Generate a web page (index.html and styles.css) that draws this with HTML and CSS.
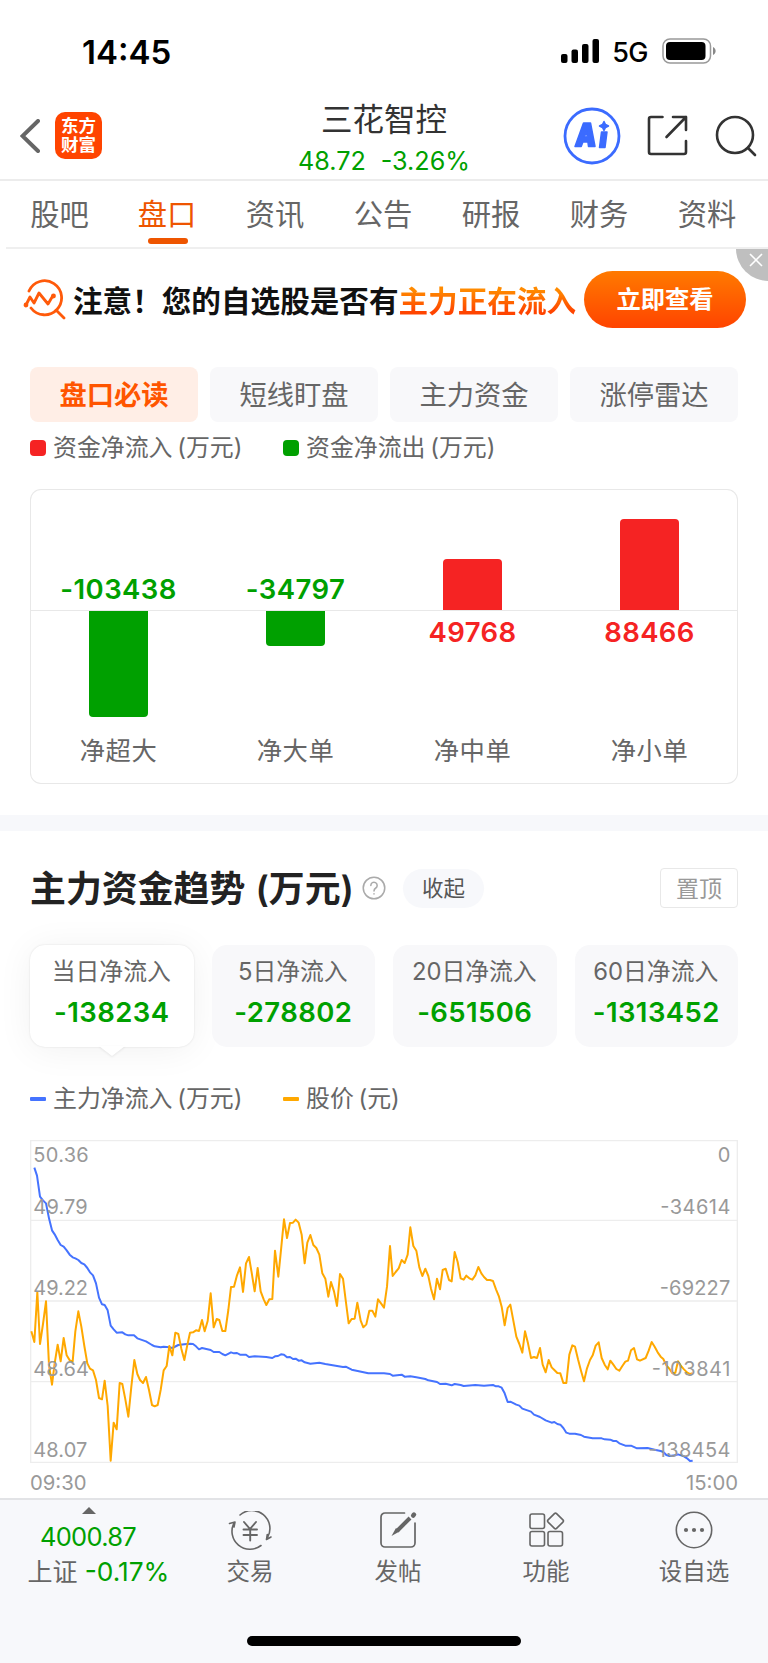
FILE: index.html
```
<!DOCTYPE html>
<html lang="zh-CN">
<head>
    <meta charset="UTF-8">
    <meta name="viewport" content="width=device-width, initial-scale=1.0">
    <title>三花智控 - 盘口</title>
    <link rel="stylesheet" href="styles.css">
</head>
<body>
    <div class="status-bar">
        <span class="time">14:45</span>
        <div class="status-icons">
            <svg class="signal" width="39" height="25" viewBox="0 0 39 25">
                <rect x="0" y="15" width="6.5" height="9" rx="2"/>
                <rect x="10.5" y="10.500" width="6.500" height="13.500" rx="2"/>
                <rect x="21" y="5" width="6.500" height="19" rx="2"/>
                <rect x="31.500" y="0" width="6.500" height="24" rx="2"/>
            </svg>
            <span class="network">5G</span>
            <svg class="battery" width="54" height="26" viewBox="0 0 54 26">
                <rect x="1" y="1" width="47.500" height="24" rx="7" fill="none" stroke="#999" stroke-width="1.5"/>
                <rect x="4" y="4" width="39.500" height="18" rx="4"/>
                <path d="M51 9c3.500 1.500 3.500 6.500 0 8z" fill="#888"/>
            </svg>
        </div>
    </div>

    <header class="header">
        <div class="header-left">
            <svg class="back" width="20" height="34" viewBox="0 0 20 34"><path d="M18 2 2.500 17 18 32" fill="none" stroke="#666" stroke-width="4" stroke-linecap="round"/></svg>
            <div class="logo">东方<br>财富</div>
        </div>
        <div class="stock">
            <h1 class="stock-name">三花智控</h1>
            <div class="stock-price"><span>48.72</span><span>-3.26%</span></div>
        </div>
        <div class="header-right">
            <svg class="ai" width="58" height="58" viewBox="0 0 58 58">
                <circle cx="29" cy="29" r="27" fill="none" stroke="#3b6bff" stroke-width="2.800"/>
                <g fill="#3b6bff" stroke="#3b6bff" stroke-width="1.500" stroke-linejoin="round" fill-rule="evenodd">
                    <path d="M12 39.500 20.500 16h7L32 39.500h-6.500l-.6-4.500h-5l-1.700 4.500zM21.500 30h2.700l-.7-6z"/>
                    <path d="M38.500 25h5.500l-2 15.500h-5.500z"/>
                    <path d="M41 14.500 42.500 17.500l3 1.500-3 1.500-1.500 3-1.500-3-3-1.500 3-1.500z"/>
                </g>
            </svg>
            <svg class="share" width="41" height="42" viewBox="0 0 41 42" fill="none" stroke="#333" stroke-width="2.600" stroke-linecap="round" stroke-linejoin="round">
                <path d="M15.500 2H4a2 2 0 0 0-2 2v33a2 2 0 0 0 2 2h33a2 2 0 0 0 2-2V26M26 2h13v13M39 2 19.500 22"/>
            </svg>
            <svg class="search" width="42" height="42" viewBox="0 0 42 42" fill="none" stroke="#333" stroke-width="2.600" stroke-linecap="round">
                <circle cx="20" cy="20" r="18"/><path d="m33 33 7 7"/>
            </svg>
        </div>
    </header>

    <nav class="tabs">
        <a class="tab">股吧</a>
        <a class="tab active">盘口</a>
        <a class="tab">资讯</a>
        <a class="tab">公告</a>
        <a class="tab">研报</a>
        <a class="tab">财务</a>
        <a class="tab">资料</a>
    </nav>

    <div class="banner">
        <svg class="banner-icon" width="44" height="42" viewBox="0 0 44 42" fill="none" stroke="#ff5a0a" stroke-width="2.800" stroke-linecap="round" stroke-linejoin="round">
            <path d="M6 12A17 17 0 1 1 8 29M33 31l8 8"/>
            <path d="m3 26 4-8 4 6 5-10 9 11 5-8.500"/>
            <circle cx="3" cy="26" r="1"/><circle cx="30.500" cy="17" r="1"/>
        </svg>
        <p class="banner-text">注意！您的自选股是否有<span>主力正在流入</span></p>
        <button class="banner-btn">立即查看</button>
        <div class="banner-close">
            <svg width="14" height="14" viewBox="0 0 14 14"><path d="m1 1 12 12M13 1 1 13" stroke="#fff" stroke-width="1.600"/></svg>
        </div>
    </div>

    <div class="pills">
        <button class="pill active">盘口必读</button>
        <button class="pill">短线盯盘</button>
        <button class="pill">主力资金</button>
        <button class="pill">涨停雷达</button>
    </div>

    <div class="legend">
        <span class="legend-item"><i class="square red"></i>资金净流入 (万元)</span>
        <span class="legend-item"><i class="square green"></i>资金净流出 (万元)</span>
    </div>

    <div class="flow-chart">
        <div class="flow-col down">
            <div class="upper"><b>-103438</b></div>
            <div class="lower"><div class="bar" style="height: 106px"></div></div>
            <span class="flow-name">净超大</span>
        </div>
        <div class="flow-col down">
            <div class="upper"><b>-34797</b></div>
            <div class="lower"><div class="bar" style="height: 35px"></div></div>
            <span class="flow-name">净大单</span>
        </div>
        <div class="flow-col up">
            <div class="upper"><div class="bar" style="height: 51px"></div></div>
            <div class="lower"><b>49768</b></div>
            <span class="flow-name">净中单</span>
        </div>
        <div class="flow-col up">
            <div class="upper"><div class="bar" style="height: 91px"></div></div>
            <div class="lower"><b>88466</b></div>
            <span class="flow-name">净小单</span>
        </div>
    </div>

    <div class="divider"></div>

    <div class="section-head">
        <h2>主力资金趋势 (万元)</h2>
        <svg class="help" width="24" height="24" viewBox="0 0 25 25" fill="none" stroke="#aaa" stroke-width="1.600" stroke-linecap="round">
            <circle cx="12.500" cy="12.500" r="11.200"/>
            <path d="M9.200 9.800a3.300 3.300 0 1 1 5.200 2.700c-1.300.9-1.900 1.500-1.900 3"/><path d="M12.500 18.500v.2"/>
        </svg>
        <button class="collapse">收起</button>
        <button class="pin">置顶</button>
    </div>

    <div class="periods">
        <div class="period active"><span>当日净流入</span><b>-138234</b></div>
        <div class="period"><span>5日净流入</span><b>-278802</b></div>
        <div class="period"><span>20日净流入</span><b>-651506</b></div>
        <div class="period"><span>60日净流入</span><b>-1313452</b></div>
    </div>

    <div class="legend trend-legend">
        <span class="legend-item"><i class="dash blue"></i>主力净流入 (万元)</span>
        <span class="legend-item"><i class="dash orange"></i>股价 (元)</span>
    </div>

    <div class="trend">
        <svg class="trend-chart" width="708" height="323" viewBox="30 30 2124 969">
            <path class="grid" d="M32 32H2152V997H32zM32 271H2152M32 513H2152M32 755H2152"/>
            <!-- 主力净流入 -->
            <polyline class="line-flow" points="43,113 51,137 60,200 69,211 78,220 87,265 96,301 104,313 113,330 122,345 131,350 140,361 149,374 158,382 166,385 175,390 184,399 193,403 202,414 210,427 219,436 228,460 237,503 246,523 254,525 263,541 272,587 281,598 290,608 307,607 316,613 325,616 342,616 352,625 378,634 396,645 404,649 422,652 431,650 448,652 457,654 475,645 493,643 510,641 519,642 528,649 537,658 546,654 572,660 581,666 598,666 607,672 616,676 633,667 642,670 651,669 660,674 678,674 687,681 704,679 739,681 757,684 765,679 774,678 783,673 792,674 801,682 810,681 819,687 827,686 836,692 845,691 854,697 871,701 898,698 916,702 969,711 977,710 995,719 1013,723 1045,730 1092,730 1110,732 1118,737 1145,734 1154,740 1171,739 1189,742 1216,747 1225,751 1251,756 1260,762 1277,761 1295,766 1304,762 1322,765 1331,768 1366,765 1392,767 1419,765 1428,769 1436,769 1445,773 1454,790 1463,816 1471,815 1489,824 1498,827 1507,836 1533,845 1542,854 1560,861 1577,871 1595,878 1603,876 1612,882 1621,884 1630,894 1639,908 1648,911 1665,911 1683,915 1692,920 1718,925 1745,925 1754,928 1771,929 1780,933 1789,933 1798,940 1816,947 1833,947 1851,955 1883,954 1904,959 1922,963 1930,966 1939,975 1948,978 1966,976 1974,973 1992,979 2001,985 2010,993 2018,992"/>
            <!-- 股价 -->
            <polyline class="line-price" points="34,604 43,636 52,486 60,642 69,582 78,514 87,706 96,764 104,700 113,644 122,694 131,624 140,676 149,691 158,694 166,604 175,544 184,590 193,648 202,700 210,716 219,721 228,750 237,804 246,808 254,752 263,828 272,992 281,878 290,898 299,759 307,762 316,808 325,860 334,770 343,690 352,732 360,750 369,759 378,741 387,780 396,825 404,829 413,825 422,780 431,721 440,708 448,648 457,676 466,608 475,612 484,656 493,690 501,650 510,608 519,607 528,601 537,603 546,570 554,604 563,573 572,490 581,592 590,567 598,570 607,603 616,603 625,540 633,471 642,470 651,436 660,412 669,486 678,400 687,381 695,428 704,484 713,414 722,484 731,508 739,525 748,508 757,507 765,362 775,440 784,350 792,268 801,324 810,279 819,278 827,269 836,278 845,314 854,400 862,338 871,315 880,345 889,354 898,374 907,430 916,446 925,500 933,456 942,484 951,528 960,432 969,446 977,510 986,580 995,567 1004,566 1012,518 1022,572 1030,592 1039,583 1048,542 1057,542 1066,560 1074,508 1083,520 1092,533 1101,470 1110,348 1118,438 1127,426 1136,415 1145,390 1154,399 1163,374 1171,292 1180,348 1189,362 1198,412 1207,438 1216,416 1225,438 1233,476 1242,508 1251,446 1260,478 1268,420 1277,416 1287,450 1295,454 1304,366 1313,396 1322,445 1331,449 1339,437 1348,445 1357,449 1366,436 1375,411 1384,430 1392,441 1401,450 1410,450 1419,453 1428,478 1437,500 1445,530 1454,586 1463,534 1471,524 1480,572 1489,620 1498,642 1507,668 1515,604 1524,640 1533,684 1542,681 1551,684 1560,654 1568,704 1577,727 1586,690 1595,712 1603,720 1612,729 1621,730 1630,759 1639,759 1648,674 1657,646 1665,650 1674,688 1683,722 1692,754 1701,715 1710,690 1718,676 1727,647 1736,637 1745,684 1754,704 1763,718 1771,692 1780,704 1789,717 1798,722 1807,708 1816,695 1824,692 1833,661 1842,654 1851,688 1860,692 1877,684 1886,662 1895,636 1904,650 1913,667 1922,680 1930,687 1939,706 1948,716 1957,730 1966,728 1974,694 1983,708 1992,718 2001,727 2010,732 2018,730"/>
            <g class="axis">
                <text x="40" y="95" textLength="166">50.36</text>
                <text x="40" y="253" textLength="163">49.79</text>
                <text x="40" y="496" textLength="164">49.22</text>
                <text x="40" y="739" textLength="167">48.64</text>
                <text x="40" y="981" textLength="162">48.07</text>
            </g>
            <g class="axis end">
                <text x="2131" y="95">0</text>
                <text x="2131" y="253" textLength="210">-34614</text>
                <text x="2131" y="496" textLength="212">-69227</text>
                <text x="2131" y="739" textLength="236">-103841</text>
                <text x="2131" y="981" textLength="246">-138454</text>
            </g>
        </svg>
        <div class="trend-time"><span>09:30</span><span>15:00</span></div>
    </div>

    <footer class="bottom-bar">
        <div class="index">
            <i class="caret"></i>
            <span class="index-value">4000.87</span>
            <span class="index-row">上证 <em>-0.17%</em></span>
        </div>
        <div class="action">
            <svg width="44" height="40" viewBox="0 0 44 40" fill="none" stroke="#666" stroke-width="1.600" stroke-linecap="round" stroke-linejoin="round">
                <path d="M12 4A18 18 0 0 1 39.500 26.500M38.500 28.500l4.500-2.500M38.500 28.500l.8-5"/>
                <path d="M33 34.500A18 18 0 0 1 6 12M1.500 12.500l5.500-1.500-1 5"/>
                <path d="m16 11 6 7 6-7M15.500 18.500h13.500M15.500 24h13.500M22.200 18v11.500" stroke-width="1.900"/>
            </svg>
            <span>交易</span>
        </div>
        <div class="action">
            <svg width="44" height="40" viewBox="0 0 44 40" fill="none" stroke="#666" stroke-width="1.700" stroke-linecap="round">
                <path d="M28.500 2H9a4 4 0 0 0-4 4v26a4 4 0 0 0 4 4h26a4 4 0 0 0 4-4V12"/>
                <path d="M37.200 4.500 38 3.600" stroke-width="4.500"/>
                <path d="M34 7 21 20" stroke-width="4" stroke-linecap="butt"/>
                <path d="m23.500 20.500-8 4.500 4.500-8z" fill="#666" stroke="none"/>
            </svg>
            <span>发帖</span>
        </div>
        <div class="action">
            <svg width="44" height="40" viewBox="0 0 44 40" fill="none" stroke="#666" stroke-width="1.600" stroke-linejoin="round">
                <rect x="6" y="3" width="14.500" height="14.500" rx="2"/>
                <rect x="6" y="20.500" width="14.500" height="14.500" rx="2"/>
                <rect x="24" y="20.500" width="14.500" height="14.500" rx="2"/>
                <rect x="25.500" y="4" width="12" height="12" rx="1.500" transform="rotate(45 31.500 10)"/>
            </svg>
            <span>功能</span>
        </div>
        <div class="action">
            <svg width="44" height="40" viewBox="0 0 44 40">
                <circle cx="22" cy="19" r="17.700" fill="none" stroke="#666" stroke-width="1.600"/>
                <g fill="#666"><circle cx="14" cy="19" r="2.100"/><circle cx="22" cy="19" r="2.100"/><circle cx="30" cy="19" r="2.100"/></g>
            </svg>
            <span>设自选</span>
        </div>
        <div class="home-indicator"></div>
    </footer>
</body>
</html>
```
FILE: styles.css
```
* {
    margin: 0;
    padding: 0;
    box-sizing: border-box;
}

body {
    width: 768px;
    height: 1663px;
    background: #fff;
    color: #666;
    font-family: Inter, "Noto Sans CJK SC", sans-serif;
    overflow: hidden;
}

button {
    border: none;
    font-family: inherit;
    color: inherit;
}

svg {
    display: block;
    flex-shrink: 0;
}

/* status bar */
.status-bar {
    height: 96px;
    padding: 6px 52px 0 82px;
    display: flex;
    align-items: center;
    justify-content: space-between;
    color: #000;
}

.time {
    font-size: 33px;
    font-weight: 600;
    margin-top: 1px;
}

.status-icons {
    display: flex;
    align-items: center;
}

.network {
    font-size: 27px;
    font-weight: 500;
    letter-spacing: -0.5px;
    line-height: 34px;
    margin: 3px 14px 0 12px;
}

/* header */
.header {
    height: 85px;
    border-bottom: 2px solid #ececec;
    display: grid;
    grid-template-columns: 1fr auto 1fr;
    align-items: center;
}

.header-left {
    display: flex;
    align-items: center;
    padding: 0 0 4px 20px;
}

.logo {
    width: 47px;
    height: 47px;
    margin-left: 15px;
    border-radius: 10px;
    background: #ff4400;
    color: #fff;
    font-size: 17.5px;
    font-weight: 700;
    line-height: 19px;
    text-align: center;
    padding-top: 4px;
}

.stock {
    text-align: center;
}

.stock-name {
    font-size: 31.5px;
    font-weight: 400;
    line-height: 40px;
    margin-top: -3px;
    color: #333;
}

.stock-price {
    display: flex;
    gap: 15px;
    font-size: 25.2px;
    line-height: 30px;
    margin-top: 6px;
    margin-bottom: -3px;
    color: #00a000;
}

.header-right {
    display: flex;
    align-items: center;
    justify-content: flex-end;
    padding: 0 11px 3px 0;
}

.share {
    margin: 0 27px 0 26px;
}

/* tabs */
.tabs {
    height: 68px;
    margin-left: 6px;
    padding-right: 7px;
    border-bottom: 2px solid #efefef;
    display: flex;
}

.tab {
    width: 108px;
    flex-shrink: 0;
    display: flex;
    flex-direction: column;
    align-items: center;
    font-size: 29.3px;
    line-height: 67px;
}

.tab:first-child {
    width: 107px;
}

.tab.active {
    color: #ee5500;
}

.tab.active::after {
    content: "";
    width: 40px;
    height: 6px;
    border-radius: 3px;
    background: #ee5500;
    margin: -10px 0 0 2px;
}

/* banner */
.banner {
    position: relative;
    height: 101px;
    padding: 0 22px 0 23px;
    display: flex;
    align-items: center;
    overflow: hidden;
}

.banner-text {
    margin: 3px 0 0 6px;
    font-size: 29.6px;
    font-weight: 700;
    line-height: 40px;
    color: #111;
    white-space: nowrap;
}

.banner-text span {
    background: linear-gradient(#ff8a00 20%, #ff4400 80%);
    -webkit-background-clip: text;
    background-clip: text;
    color: transparent;
}

.banner-btn {
    width: 162px;
    height: 57px;
    margin-left: auto;
    padding-bottom: 4px;
    border-radius: 29px;
    background: linear-gradient(#ff7a00, #ff4400);
    color: #fff;
    font-size: 24.3px;
    font-weight: 700;
}

.banner-close {
    position: absolute;
    top: -33px;
    right: -33px;
    width: 65px;
    height: 65px;
    border-radius: 50%;
    background: #bfbfbf;
}

.banner-close svg {
    margin: 37px 0 0 13px;
}

/* pills */
.pills {
    display: grid;
    grid-template-columns: repeat(4, 1fr);
    gap: 12px;
    margin: 17px 30px 0;
}

.pill {
    height: 55px;
    padding-bottom: 3px;
    border-radius: 8px;
    background: #f8f8fa;
    font-size: 27.3px;
}

.pill.active {
    background: #ffeee6;
    color: #ff5500;
    font-weight: 700;
}

/* legends */
.legend {
    height: 53px;
    padding-left: 30px;
    display: flex;
    align-items: center;
    font-size: 23.9px;
    word-spacing: -2px;
    line-height: 36px;
}

.legend-item {
    width: 253px;
    display: flex;
    align-items: center;
    white-space: pre;
    margin-top: -2px;
}

.square {
    width: 16px;
    height: 16px;
    border-radius: 4px;
    margin-right: 7px;
}

.dash {
    width: 16px;
    height: 4px;
    border-radius: 1px;
    margin-right: 7px;
}

.red {
    background: #f52323;
}

.green {
    background: #00a000;
}

.blue {
    background: #4573ff;
}

.orange {
    background: #ffa800;
}

/* fund flow bars */
.flow-chart {
    height: 295px;
    margin: 14px 30px 31px;
    box-shadow: inset 0 0 0 1px #e8e8e8;
    border-radius: 11px;
    display: grid;
    grid-template-columns: repeat(4, 177px);
}

.flow-col {
    display: flex;
    flex-direction: column;
    align-items: center;
}

.upper {
    width: 100%;
    height: 122px;
    border-bottom: 1px solid #e8e8e8;
    display: flex;
    flex-direction: column;
    align-items: center;
    justify-content: flex-end;
}

.lower {
    height: 122px;
}

.flow-col b {
    display: block;
    font-size: 27.5px;
    font-weight: 600;
    letter-spacing: 0.4px;
    line-height: 43px;
}

.upper b {
    margin-bottom: -1px;
}

.bar {
    width: 59px;
}

.down b {
    color: #00a000;
}

.up b {
    color: #f52323;
}

.down .bar {
    background: #00a000;
    border-radius: 0 0 4px 4px;
}

.up .bar {
    background: #f52323;
    border-radius: 4px 4px 0 0;
}

.flow-name {
    font-size: 25.3px;
    letter-spacing: 0.5px;
    line-height: 36px;
}

.divider {
    height: 16px;
    background: #f7f8fb;
}

/* trend */
.section-head {
    height: 114px;
    padding: 0 30px;
    display: flex;
    align-items: center;
}

.section-head h2 {
    margin-top: -4px;
    font-size: 35.9px;
    font-weight: 600;
    word-spacing: 1px;
    color: #222;
    white-space: nowrap;
}

.help {
    margin-left: 8px;
}

.collapse {
    width: 81px;
    height: 39px;
    margin-left: 17px;
    padding-bottom: 3px;
    border-radius: 20px;
    background: #f7f8fb;
    color: #555;
    font-size: 21.5px;
}

.pin {
    width: 78px;
    height: 40px;
    margin-left: auto;
    padding-bottom: 2px;
    border: 1.5px solid #e8e8e8;
    border-radius: 4px;
    background: #fff;
    color: #999;
    font-size: 23px;
}

.periods {
    display: grid;
    grid-template-columns: repeat(4, 1fr);
    gap: 18px;
    margin: 0 30px;
}

.period {
    position: relative;
    height: 102px;
    padding-top: 8px;
    border-radius: 15px;
    background: #f8f8fa;
    display: flex;
    flex-direction: column;
    align-items: center;
}

.period span {
    font-size: 23.8px;
    line-height: 38px;
    margin-right: 1px;
}

.period b {
    font-size: 27.5px;
    font-weight: 600;
    letter-spacing: 0.4px;
    line-height: 43px;
    color: #00a000;
}

.period.active {
    background: #fff;
    box-shadow: 0 0 2px rgba(0, 0, 0, 0.12), 0 3px 36px rgba(0, 0, 0, 0.06);
}

.period.active::after {
    content: "";
    position: absolute;
    left: 69px;
    top: 101px;
    border: 13px solid transparent;
    border-top: 10px solid #fff;
    border-bottom: none;
    filter: drop-shadow(0 1px 1px rgba(0, 0, 0, 0.08));
}

.trend-legend {
    height: 93px;
    padding-top: 12px;
}

.trend {
    margin: 0 30px;
    height: 358px;
}

.grid {
    fill: none;
    stroke: #ededed;
    stroke-width: 4;
}

.line-flow,
.line-price {
    fill: none;
    stroke-width: 6;
    stroke-linejoin: round;
}

.line-flow {
    stroke: #4573ff;
}

.line-price {
    stroke: #ffa800;
}

.axis {
    font-size: 60px;
    fill: #999;
}

.end {
    text-anchor: end;
}

.trend-time {
    display: flex;
    justify-content: space-between;
    font-size: 20.3px;
    line-height: 40px;
    color: #999;
}

/* bottom bar */
.bottom-bar {
    position: relative;
    height: 165px;
    border-top: 2px solid #e2e3e6;
    background: #f7f8fb;
    display: flex;
}

.index {
    width: 176px;
    display: flex;
    flex-direction: column;
    align-items: center;
    color: #00a000;
}

.caret {
    margin: 7px 0 0 1px;
    border: 7px solid transparent;
    border-top: none;
    border-bottom-color: #666;
}

.index-value {
    margin-top: 5px;
    font-size: 25.5px;
    letter-spacing: -0.7px;
    line-height: 36px;
}

.index-row {
    margin-left: 21px;
    font-size: 25px;
    line-height: 33px;
    color: #666;
    white-space: nowrap;
}

.index-row em {
    font-style: normal;
    font-size: 26.3px;
    color: #00a000;
}

.action {
    width: 148px;
    padding-top: 11px;
    display: flex;
    flex-direction: column;
    align-items: center;
    font-size: 23.5px;
    line-height: 42px;
}

.home-indicator {
    position: absolute;
    left: 247px;
    bottom: 17px;
    width: 274px;
    height: 10px;
    border-radius: 5px;
    background: #000;
}
```
